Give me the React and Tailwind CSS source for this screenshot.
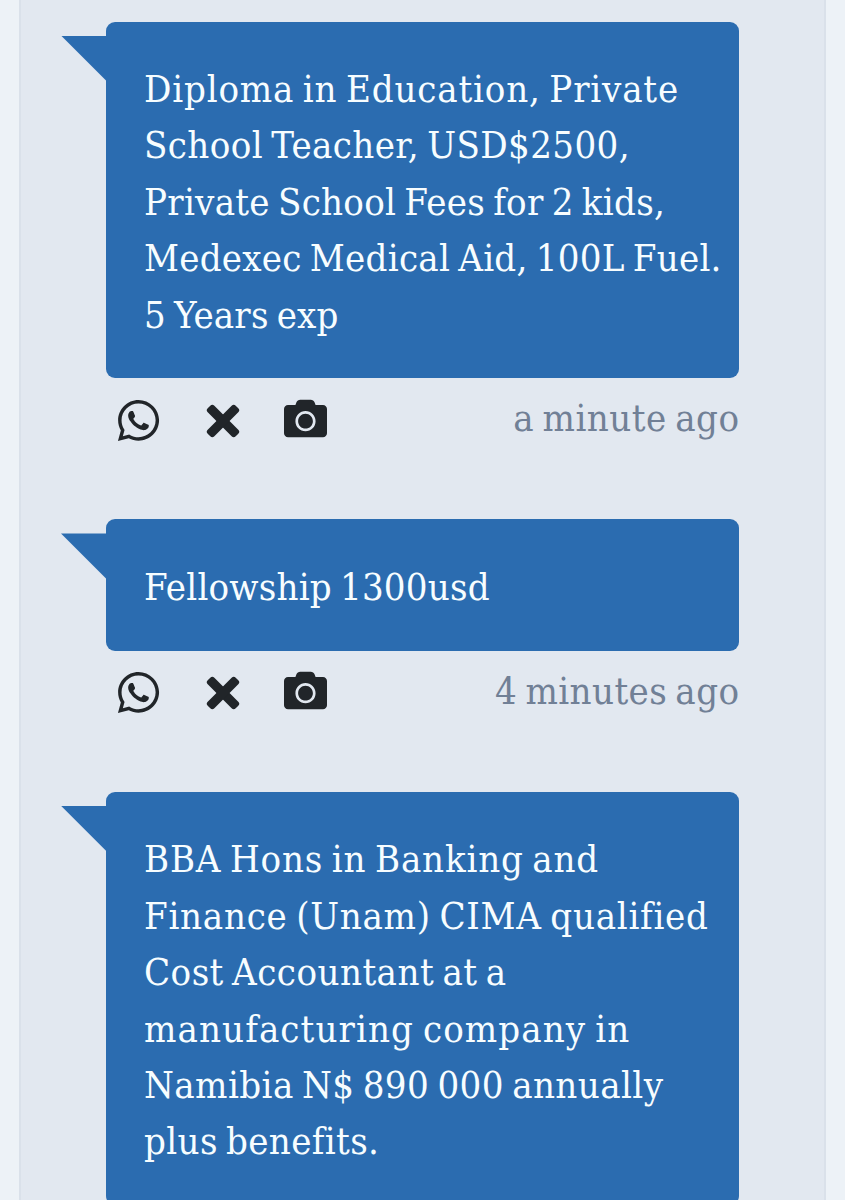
import React from 'react';
import { FaWhatsapp, FaCamera } from 'react-icons/fa';

const messages = [
  {
    id: 1,
    time: 'a minute ago',
    timeClass: 'tracking-[0.5px] -mr-[0.5px]',
    lines: [
      { text: 'Diploma in Education, Private', className: 'tracking-[0.81px]' },
      { text: 'School Teacher, USD$2500,', className: 'tracking-[0.38px]' },
      { text: 'Private School Fees for 2 kids,', className: 'tracking-[0.27px]' },
      { text: 'Medexec Medical Aid, 100L Fuel.', className: 'tracking-[0.25px]' },
      { text: '5 Years exp', className: 'tracking-[0.18px]' },
    ],
  },
  {
    id: 2,
    time: '4 minutes ago',
    timeClass: 'tracking-[0.4px] -mr-[0.4px]',
    lines: [{ text: 'Fellowship 1300usd', className: 'tracking-[0.2px]' }],
  },
  {
    id: 3,
    lines: [
      { text: 'BBA Hons in Banking and', className: 'tracking-[0.8px]' },
      { text: 'Finance (Unam) CIMA qualified', className: 'tracking-[0.73px]' },
      { text: 'Cost Accountant at a', className: 'tracking-[0.45px]' },
      { text: 'manufacturing company in', className: 'tracking-[1.08px]' },
      { text: 'Namibia N$ 890 000 annually', className: 'tracking-[0.41px]' },
      { text: 'plus benefits.', className: 'tracking-[0.36px]' },
    ],
  },
];

const CrossIcon = () => (
  <svg viewBox="0 0 34 34" className="w-[34px] h-[34px]" fill="currentColor">
    <rect x="-2.8" y="12.3" width="39.6" height="9.4" rx="2.9" transform="rotate(45 17 17)" />
    <rect x="-2.8" y="12.3" width="39.6" height="9.4" rx="2.9" transform="rotate(-45 17 17)" />
  </svg>
);

const Message = ({ message }) => (
  <div>
    <div className="relative bg-[#2b6cb0] rounded-[9px] px-[38px] pt-[39.5px] pb-[35.5px]">
      {/* Bubble tail */}
      <div className="absolute -left-[45px] top-[14px] w-[46px] h-[46px] bg-[#2b6cb0] [clip-path:polygon(0_0,100%_0,100%_100%)]"></div>
      {message.lines.map((line) => (
        <p key={line.text} className="h-[56.4px] leading-[56.4px] text-[38px] text-[#f7fdff] whitespace-nowrap">
          <span className={line.className}>{line.text}</span>
        </p>
      ))}
    </div>
    {message.time && (
      <div className="flex items-center h-[141px] pb-[57px] pl-3">
        <div className="flex items-center text-[#212529]">
          <FaWhatsapp className="w-[47px] h-[47px] -mx-[3px]" />
          <div className="ml-[47px] mt-px"><CrossIcon /></div>
          <FaCamera className="w-[43px] h-[43px] ml-[44px] mb-1" />
        </div>
        <div className="ml-auto mb-[3px] text-[38px] text-[#718096] whitespace-nowrap">
          <span className={message.timeClass}>{message.time}</span>
        </div>
      </div>
    )}
  </div>
);

const App = () => {
  return (
    <div className="h-[1200px] overflow-hidden bg-[#edf2f7] px-[19px] font-['DejaVu_Serif_Condensed','DejaVu_Serif',serif] [font-stretch:condensed] [word-spacing:-3px]">
      <div className="h-full bg-[#e2e8f0] border-x-2 border-[#dae1ea] pt-[21.5px] px-[85px]">
        {messages.map((message) => (
          <Message key={message.id} message={message} />
        ))}
      </div>
    </div>
  );
};

export default App;
